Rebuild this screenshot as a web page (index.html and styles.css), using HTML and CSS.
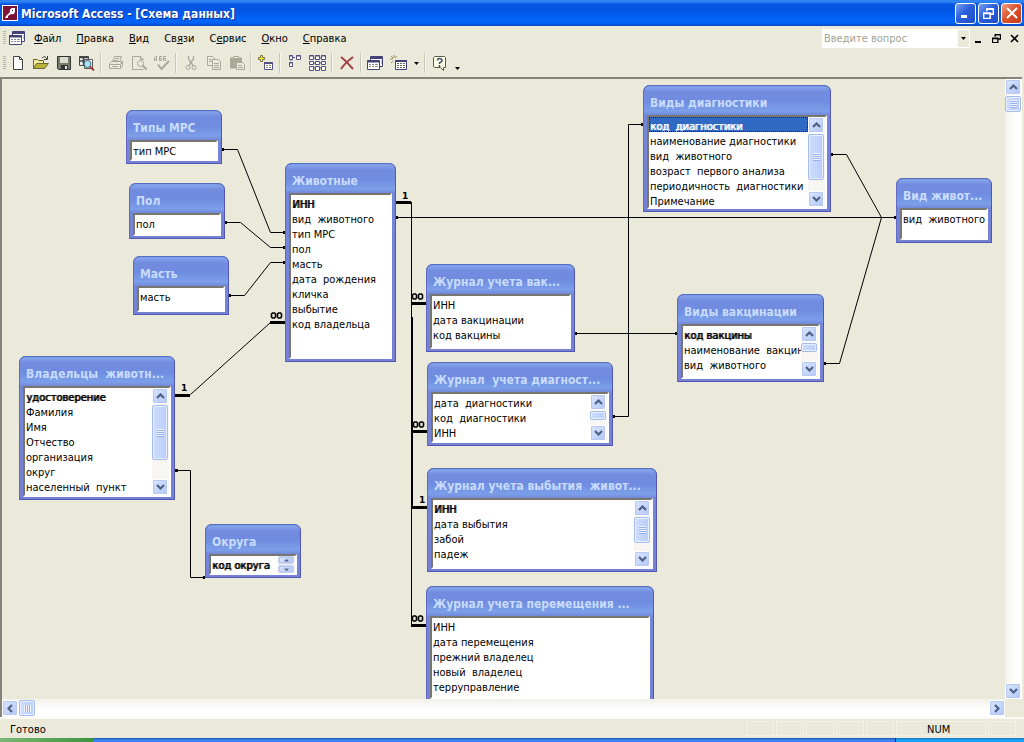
FILE: index.html
```html
<!DOCTYPE html>
<html lang="ru">
<head>
<meta charset="utf-8">
<title>Microsoft Access - [Схема данных]</title>
<link rel="stylesheet" href="styles.css">
</head>
<body>
<svg class="defs" width="0" height="0" aria-hidden="true">
  <symbol id="up" viewBox="0 0 9 6"><path d="M1 5L4.500 1.500L8 5" fill="none" stroke="#4d6185" stroke-width="2.200"/></symbol>
  <symbol id="down" viewBox="0 0 9 6"><path d="M1 1L4.500 4.500L8 1" fill="none" stroke="#4d6185" stroke-width="2.200"/></symbol>
  <symbol id="table" viewBox="0 0 9 8"><path d="M.5 .5h8v7h-8z" fill="#fff" stroke="#555083"/><path d="M0 1h9" stroke="#555083" stroke-width="2"/><path d="M2 3.500h2M5 3.500h2M2 5.500h2M5 5.500h2" stroke="#888"/></symbol>
  <symbol id="windows" viewBox="0 0 17 15"><path d="M3.500 .5h12v10h-12z" fill="#fff" stroke="#45427a"/><path d="M3 2h13" stroke="#45427a" stroke-width="2"/><path d="M.5 4.500h12v9H.5z" fill="#fff" stroke="#45427a"/><path d="M0 5.500h13" stroke="#45427a" stroke-width="2"/><path d="M2 8.500h2M5 8.500h2M8 8.500h3M2 10.500h2M5 10.500h2M8 10.500h3M14 5h1M14 7h1" stroke="#8a8a9a"/></symbol>
  <symbol id="restore" viewBox="0 0 10 10"><path d="M3.500 3V.5h6v5H7M3 1h7M.5 4.500h6v5h-6zM0 5h7" fill="none" stroke="currentColor" stroke-width="1.500"/></symbol>
</svg>

<header class="titlebar">
  <svg class="app-icon" width="16" height="16" viewBox="0 0 16 16"><path d="M0 0h16v16H0z" fill="#fff"/><path d="M1 1h14v14H1z" fill="#7c1238"/><path d="M3 13l1-2 4-4q-1-3 2-4h3v4q-1 3-4 2l-3 2v2z" fill="#fff"/><path d="M10 5h1v1h-1z" fill="#7c1238"/></svg>
  <h1>Microsoft Access - [Схема данных]</h1>
  <div class="win-buttons">
    <button aria-label="Свернуть"><svg width="11" height="11" viewBox="0 0 11 11"><path d="M1 8.500h6" stroke="#fff" stroke-width="3"/></svg></button>
    <button aria-label="Восстановить"><svg width="11" height="11"><use href="#restore"/></svg></button>
    <button class="close" aria-label="Закрыть"><svg width="12" height="12" viewBox="0 0 12 12"><path d="M1 1l10 10M11 1L1 11" stroke="#fff" stroke-width="2"/></svg></button>
  </div>
</header>

<nav class="menubar">
  <span class="grip"></span>
  <svg class="doc-icon" width="17" height="15" viewBox="0 0 17 15"><use href="#windows"/></svg>
  <button><u>Ф</u>айл</button><button><u>П</u>равка</button><button><u>В</u>ид</button><button>Св<u>я</u>зи</button><button>С<u>е</u>рвис</button><button><u>О</u>кно</button><button><u>С</u>правка</button>
  <div class="ask">
    <input type="text" placeholder="Введите вопрос" aria-label="Введите вопрос">
    <button aria-label="Список вопросов"><svg width="5" height="3" viewBox="0 0 5 3"><path d="M0 0h5L2.500 3z"/></svg></button>
  </div>
  <div class="doc-buttons">
    <button aria-label="Свернуть окно"><svg width="10" height="10" viewBox="0 0 10 10"><path d="M2 9h6" stroke="#000" stroke-width="2"/></svg></button>
    <button aria-label="Восстановить окно"><svg width="9" height="9"><use href="#restore"/></svg></button>
    <button aria-label="Закрыть окно"><svg width="9" height="9" viewBox="0 0 9 9"><path d="M1 1l7 7M8 1L1 8" stroke="#000" stroke-width="1.600"/></svg></button>
  </div>
</nav>

<div class="toolbar" role="toolbar">
  <span class="grip"></span>
  <button aria-label="Создать"><svg width="16" height="16" viewBox="0 0 16 16"><path d="M3.500 1.500h6l3 3v10h-9z" fill="#fff" stroke="#444"/><path d="M9.500 1.500v3h3" fill="none" stroke="#444"/></svg></button>
  <button aria-label="Открыть"><svg width="16" height="16" viewBox="0 0 16 16"><path d="M.5 13.500v-9h4l1 1h5v3" fill="#f5ed9b" stroke="#68682c"/><path d="M.5 13.500l3-5h12l-4 5z" fill="#b9b13c" stroke="#68682c"/><path d="M9 3q3-3 5 1M14.500 1v3.500H11" fill="none" stroke="#444"/></svg></button>
  <button aria-label="Сохранить"><svg width="16" height="16" viewBox="0 0 16 16"><path d="M1.500 1.500h13v13h-12l-1-1z" fill="#777a68" stroke="#333"/><path d="M4 2h8v6H4z" fill="#d9d9cc"/><path d="M5 10h7v4H5z" fill="#333"/><path d="M9 11h2v3H9z" fill="#ddd"/></svg></button>
  <button aria-label="Найти файл"><svg width="17" height="16" viewBox="0 0 17 16"><path d="M1.500 1.500h9v9h-9z" fill="#eee" stroke="#444"/><path d="M1 2.500h10M5.500 2v8M2 6h8" stroke="#444" stroke-width="1.500"/><path d="M6.500 4.500h8v9h-8z" fill="#fff" stroke="#555"/><circle cx="9.500" cy="9" r="3.500" fill="#a9e2ef" stroke="#45657a"/><path d="M12 11.500l4 4" stroke="#a33c3c" stroke-width="2"/></svg></button>
  <span class="sep"></span>
  <button disabled aria-label="Печать"><svg width="16" height="16" viewBox="0 0 16 16" fill="none" stroke="#aaa997"><path d="M4.500 7l2-5.500h7l-2 5.500M1.500 8.500l2-2h11l-2 3v4h-11zM1.500 9.500h11l2-3v4l-2 3M4 11.500h6M7 3.500h4M6 5.500h4"/></svg></button>
  <button disabled aria-label="Предварительный просмотр"><svg width="16" height="16" viewBox="0 0 16 16" fill="none" stroke="#aaa997"><path d="M12.500 5V4.500l-3-3h-8v13h11M9.500 1.500v3h3"/><circle cx="9.500" cy="8.500" r="3"/><path d="M11.500 10.500l4 4" stroke-width="2"/></svg></button>
  <button disabled aria-label="Орфография"><svg width="16" height="16" viewBox="0 0 16 16" fill="none" stroke="#aaa997"><path d="M.5 6V2.500l1-1h1v4.500M.5 4.500h2M8 1.500H5.500v4h2v-2h-2M11 1.500H9.500v4h2v-2h-2M10 1.500h2"/><path d="M4 9.500l3.500 4.500L15 6" stroke-width="2"/></svg></button>
  <span class="sep"></span>
  <button disabled aria-label="Вырезать"><svg width="16" height="16" viewBox="0 0 16 16" fill="none" stroke="#aaa997"><path d="M5.500 1v3l5 7M10.500 1v3l-5 7" stroke-width="1.300"/><circle cx="5" cy="12.500" r="2"/><circle cx="11" cy="12.500" r="2"/></svg></button>
  <button disabled aria-label="Копировать"><svg width="16" height="16" viewBox="0 0 16 16" fill="none" stroke="#aaa997"><path d="M6 10.500H1.500v-9h5l2 2V5M6.500 4.500h6l2 2v8h-8zM3 4.500h3M3 6.500h3M8 8.500h5M8 10.500h5M8 12.500h5"/></svg></button>
  <button disabled aria-label="Вставить"><svg width="16" height="16" viewBox="0 0 16 16"><path d="M1 2.500h12v11H1z" fill="#aaa997"/><path d="M4.500 1.500h5v2h-5z" fill="#ecebdc" stroke="#aaa997"/><path d="M7.500 7.500h6l2 2v5h-8z" fill="#ecebdc" stroke="#aaa997"/><path d="M9 10.500h4M9 12.500h5" stroke="#aaa997"/></svg></button>
  <span class="sep"></span>
  <button aria-label="Отобразить таблицу"><svg width="17" height="16" viewBox="0 0 17 16"><path d="M3.500 .5h2v2h2v2h-2v2h-2v-2h-2v-2h2z" fill="#ffef28" stroke="#77743a"/><use href="#table" x="7" y="7" width="9" height="8"/></svg></button>
  <span class="sep"></span>
  <button aria-label="Показать прямые связи"><svg width="16" height="16" viewBox="0 0 16 16" fill="#fff" stroke="#555083"><path d="M2.500 .5h3v4h-3zM9.500 .5h4v4h-4zM2.500 7.500h3v4h-3zM2 1h4M9 1h5M2 8h4M6 2.500h2M4 5v1"/></svg></button>
  <button aria-label="Показать все связи"><svg width="17" height="16" viewBox="0 0 17 16" fill="#fff" stroke="#555083"><path d="M.5 .5h4v4h-4zM6.500 .5h4v4h-4zM12.500 .5h4v4h-4zM.5 6.500h4v3h-4zM6.500 6.500h4v3h-4zM12.500 6.500h4v3h-4zM.5 11.500h4v4h-4zM6.500 11.500h4v4h-4zM12.500 11.500h4v4h-4zM0 1h5M6 1h5M12 1h5M4 3h3M10 3h3M4 8h3M10 8h3M4 13h3M10 13h3"/></svg></button>
  <span class="sep"></span>
  <button aria-label="Удалить"><svg width="16" height="16" viewBox="0 0 16 16"><path d="M2 2q5 4 12 12M14 2Q6 8 2 14" fill="none" stroke="#a33f42" stroke-width="2"/></svg></button>
  <span class="sep"></span>
  <button aria-label="Окно базы данных"><svg width="17" height="15" viewBox="0 0 17 15"><use href="#windows"/></svg></button>
  <button aria-label="Новый объект"><svg width="17" height="16" viewBox="0 0 17 16"><path d="M4 0v3M0 4h3M1 1l2 2M7 1L5 3M1 8l2-2" stroke="#96985a"/><path d="M5.500 5.500h11v9h-11z" fill="#fff" stroke="#45427a"/><path d="M5 6h12" stroke="#45427a" stroke-width="2"/><path d="M7 8.500h8M7 10.500h8M7 12.500h8" stroke="#666" stroke-dasharray="2 1"/></svg></button>
  <button class="arrow" aria-label="Другие объекты"><svg width="5" height="3" viewBox="0 0 5 3"><path d="M0 0h5L2.500 3z"/></svg></button>
  <span class="sep"></span>
  <button aria-label="Справка"><svg width="16" height="17" viewBox="0 0 16 17"><path d="M2.500 1.500h10l1 1v10h-2v3l-3-3h-6l-1-1v-9z" fill="#ffffe8" stroke="#5a5a4c"/><path d="M5.500 5.500q0-2 2-2t2.500 1.500-2.500 3v1M7.500 10v2" fill="none" stroke="#444b70" stroke-width="1.600"/></svg></button>
  <button class="arrow low" aria-label="Параметры панели"><svg width="5" height="3" viewBox="0 0 5 3"><path d="M0 0h5L2.500 3z"/></svg></button>
</div>

<main class="workspace">
  <div class="canvas">
    <section class="node types"><h2>Типы МРС</h2><div class="list"><ul><li>тип МРС</li></ul></div></section>
    <section class="node sex"><h2>Пол</h2><div class="list"><ul><li>пол</li></ul></div></section>
    <section class="node suit"><h2>Масть</h2><div class="list"><ul><li>масть</li></ul></div></section>
    <section class="node animals"><h2>Животные</h2><div class="list"><ul><li class="key">ИНН</li><li>вид  животного</li><li>тип МРС</li><li>пол</li><li>масть</li><li>дата  рождения</li><li>кличка</li><li>выбытие</li><li>код владельца</li></ul></div></section>
    <section class="node owners"><h2>Владельцы  животн...</h2><div class="list"><ul><li class="key">удостоверение</li><li>Фамилия</li><li>Имя</li><li>Отчество</li><li>организация</li><li>округ</li><li>населенный  пункт</li></ul>
      <div class="vbar"><button aria-label="Вверх"><svg width="9" height="6"><use href="#up"/></svg></button><span class="thumb large"><i></i></span><button class="end" aria-label="Вниз"><svg width="9" height="6"><use href="#down"/></svg></button></div></div></section>
    <section class="node districts"><h2>Округа</h2><div class="list"><ul><li class="key">код округа</li></ul>
      <div class="vbar mini"><button aria-label="Вверх"><svg width="5" height="3"><use href="#up"/></svg></button><button aria-label="Вниз"><svg width="5" height="3"><use href="#down"/></svg></button></div></div></section>
    <section class="node log-vaccine"><h2>Журнал учета вак...</h2><div class="list"><ul><li>ИНН</li><li>дата вакцинации</li><li>код вакцины</li></ul></div></section>
    <section class="node log-diagnosis"><h2>Журнал  учета диагност...</h2><div class="list"><ul><li>дата  диагностики</li><li>код  диагностики</li><li>ИНН</li></ul>
      <div class="vbar"><button aria-label="Вверх"><svg width="9" height="6"><use href="#up"/></svg></button><span class="thumb small"></span><button class="end" aria-label="Вниз"><svg width="9" height="6"><use href="#down"/></svg></button></div></div></section>
    <section class="node log-leaving"><h2>Журнал учета выбытия  живот...</h2><div class="list"><ul><li class="key">ИНН</li><li>дата выбытия</li><li>забой</li><li>падеж</li></ul>
      <div class="vbar"><button aria-label="Вверх"><svg width="9" height="6"><use href="#up"/></svg></button><span class="thumb middle"><i></i></span><button class="end" aria-label="Вниз"><svg width="9" height="6"><use href="#down"/></svg></button></div></div></section>
    <section class="node log-moving"><h2>Журнал учета перемещения ...</h2><div class="list"><ul><li>ИНН</li><li>дата перемещения</li><li>прежний владелец</li><li>новый  владелец</li><li>терруправление</li></ul></div></section>
    <section class="node diagnosis"><h2>Виды диагностики</h2><div class="list"><ul><li class="key selected">код  диагностики</li><li>наименование диагностики</li><li>вид  животного</li><li>возраст  первого анализа</li><li>периодичность  диагностики</li><li>Примечание</li></ul>
      <div class="vbar"><button aria-label="Вверх"><svg width="9" height="6"><use href="#up"/></svg></button><span class="thumb big"><i></i></span><button class="end" aria-label="Вниз"><svg width="9" height="6"><use href="#down"/></svg></button></div></div></section>
    <section class="node species"><h2>Вид живот...</h2><div class="list"><ul><li>вид  животного</li></ul></div></section>
    <section class="node vaccine"><h2>Виды вакцинации</h2><div class="list"><ul><li class="key">код вакцины</li><li>наименование  вакцины</li><li>вид  животного</li></ul>
      <div class="vbar"><button aria-label="Вверх"><svg width="9" height="6"><use href="#up"/></svg></button><span class="thumb small"></span><button class="end" aria-label="Вниз"><svg width="9" height="6"><use href="#down"/></svg></button></div></div></section>

    <svg class="links" width="1003" height="621" viewBox="2 79 1003 621">
      <g class="thin">
        <path d="M222 149.500H237.500L270.500 232.500H285"/>
        <path d="M225 222.500H240.500L270.500 247.500H285"/>
        <path d="M229 295.500H244.500L270.500 262.500H285"/>
        <path d="M190.500 394.500L270.500 322.500"/>
        <path d="M175 470.500H190.500V577.500H205"/>
        <path d="M396 217.500H896"/>
        <path d="M831 154.500H846.500L881.500 217.500L839.500 363.500H824"/>
        <path d="M575 333.500H677"/>
        <path d="M613 416.500H628.500V124.500H643"/>
        <path d="M411.500 202V625"/>
      </g>
      <path class="medium" d="M412 317V508"/>
      <path class="thick" d="M175 395.500H190M270 322.500H285M396 202.500H411M411 303.500H426M412 431.500H427M411 507.500H427M411 625.500H426"/>
      <path class="ends" d="M222 148h2v3h-2zM225 221h2v3h-2zM229 294h2v3h-2zM283 231h2v3h-2zM283 246h2v3h-2zM283 261h2v3h-2zM175 469h3v3h-3zM203 576h2v3h-2zM396 216h2v3h-2zM894 216h2v3h-2zM831 153h2v3h-2zM824 362h2v3h-2zM575 332h2v3h-2zM675 332h2v3h-2zM613 415h2v3h-2zM641 123h2v3h-2z"/>
      <g class="many">
        <path d="M271.500 314l1-1h2l1 1v3l-1 1h-2l-1-1zM277.500 314l1-1h2l1 1v3l-1 1h-2l-1-1z"/>
        <path d="M412.500 295l1-1h2l1 1v3l-1 1h-2l-1-1zM418.500 295l1-1h2l1 1v3l-1 1h-2l-1-1z"/>
        <path d="M413.500 423l1-1h2l1 1v3l-1 1h-2l-1-1zM419.500 423l1-1h2l1 1v3l-1 1h-2l-1-1z"/>
        <path d="M412.500 617l1-1h2l1 1v3l-1 1h-2l-1-1zM418.500 617l1-1h2l1 1v3l-1 1h-2l-1-1z"/>
      </g>
      <g class="one"><text x="181" y="391">1</text><text x="402" y="199">1</text><text x="419" y="503">1</text></g>
    </svg>
  </div>
  <div class="vbar page-v"><button aria-label="Вверх"><svg width="9" height="6"><use href="#up"/></svg></button><span class="thumb square"><i></i></span><button class="end" aria-label="Вниз"><svg width="9" height="6"><use href="#down"/></svg></button></div>
  <div class="hbar"><button aria-label="Влево"><svg width="6" height="9" viewBox="0 0 6 9"><path d="M5 1L1.500 4.500L5 8" fill="none" stroke="#4d6185" stroke-width="2.200"/></svg></button><span class="thumb square"><i></i></span><button class="end" aria-label="Вправо"><svg width="6" height="9" viewBox="0 0 6 9"><path d="M1 1L4.500 4.500L1 8" fill="none" stroke="#4d6185" stroke-width="2.200"/></svg></button></div>
</main>

<footer class="status"><span class="ready">Готово</span><span class="cell"></span><span class="cell"></span><span class="cell"></span><span class="cell"></span><span class="cell"></span><span class="cell num">NUM</span><span class="cell"></span></footer>
<div class="taskbar"><span class="start"></span><span class="tray"></span></div>
</body>
</html>
```

FILE: styles.css
```css
* { box-sizing: border-box; }

body {
  margin: 0;
  height: 100vh;
  display: flex;
  flex-direction: column;
  overflow: hidden;
  background: #ebe9da;
  color: #000;
  font: 11px/15px "DejaVu Sans Condensed", "DejaVu Sans", sans-serif;
}

button { border: 0; padding: 0; background: none; color: inherit; font: inherit; display: flex; align-items: center; justify-content: center; }
svg { display: block; flex: none; }
.defs { position: absolute; }

.titlebar {
  flex: none;
  height: 26px;
  display: flex;
  align-items: center;
  gap: 3px;
  padding: 0 2px 0 2px;
  background: linear-gradient(#2f83f5 0, #2f83f5 2px, #0757e4 4px, #0455e0 10px, #0264fc 20px, #0262f5 23px, #0645c0 26px);
}
.titlebar h1 { margin: 0; flex: 1; padding-top: 1px; color: #fff; font: bold 12px/20px "DejaVu Sans Condensed", "DejaVu Sans", sans-serif; text-shadow: 1px 1px #0b2f8c; }
.win-buttons { display: flex; gap: 2px; }
.win-buttons button { width: 21px; height: 21px; border: 1px solid #fff; border-radius: 3px; color: #fff; background: linear-gradient(135deg, #7ba1f2, #2a5edc 45%, #1f4fc8); }
.win-buttons .close { background: linear-gradient(135deg, #f0a088, #dd5430 45%, #c23c16); }

.menubar { flex: none; height: 24px; display: flex; align-items: center; gap: 1px; padding: 0 5px 0 3px; }
.menubar > button { padding: 0 7px; display: block; }
.grip { width: 3px; height: 14px; background: repeating-linear-gradient(#b9b7a6 0, #b9b7a6 1px, transparent 1px, transparent 2px); }
.doc-icon { margin-left: 2px; }
.ask { margin-left: auto; display: flex; width: 148px; height: 19px; border: 1px solid #fff; background: #fff; }
.ask input { flex: 1; min-width: 0; border: 0; padding: 0 1px; background: #fff; font: inherit; }
.ask input::placeholder { color: #a3a294; opacity: 1; }
.ask button { width: 11px; background: #ebe9da; }
.doc-buttons { display: flex; gap: 8px; padding-left: 2px; }
.doc-buttons button { width: 10px; height: 12px; }

.toolbar { flex: none; height: 27px; display: flex; align-items: center; padding: 0 3px 1px; }
.toolbar button { width: 23px; height: 22px; }
.toolbar .arrow { width: 12px; }
.toolbar .low { align-items: flex-end; padding-bottom: 4px; }
.sep { width: 2px; height: 20px; margin: 0 2px; border-left: 1px solid #c8c6b4; border-right: 1px solid #f8f7f0; }

.workspace {
  flex: 1;
  min-height: 0;
  display: grid;
  grid-template-columns: 1fr 17px;
  grid-template-rows: 1fr 18px;
  margin-right: 2px;
  border-top: 2px solid #85847a;
  border-left: 2px solid #85847a;
}
.canvas { position: relative; overflow: hidden; background: #ebe9da; }

.node {
  position: absolute;
  display: flex;
  flex-direction: column;
  padding: 0 4px 3px;
  border-radius: 7px 7px 0 0;
  background: linear-gradient(#6a83d6 0, #84a4ec 2px, #738bdf 7px, #6f8ce0 16px, #7c9fe9 26px, #7287da 30px, #7680d4 100%);
  box-shadow: inset 1px 0 #6269c2, inset -1px -1px #5257b4, inset 0 1px #566fc0;
}
.node h2 { flex: none; margin: 0; height: 30px; padding: 8px 0 0 3px; color: #c9dcff; font: bold 12px/20px "DejaVu Sans Condensed", "DejaVu Sans", sans-serif; white-space: pre; overflow: hidden; }
.list { flex: 1; min-height: 0; display: flex; overflow: hidden; background: #fff; border: 2px solid #fff; border-top-color: #77776f; border-left-color: #77776f; }
.list ul { flex: 1; min-width: 0; margin: 0; padding: 0; list-style: none; overflow: hidden; }
.list li { height: 15px; padding-left: 1px; line-height: 19px; white-space: pre; }
.key { text-shadow: 1px 0 currentColor; }
.selected { color: #fff; background: #316ac5; outline: 1px dotted #10233f; outline-offset: -1px; }

.types { left: 124px; top: 31px; width: 96px; height: 54px; }
.sex { left: 127px; top: 104px; width: 96px; height: 56px; }
.suit { left: 131px; top: 177px; width: 96px; height: 59px; }
.animals { left: 283px; top: 84px; width: 111px; height: 199px; }
.owners { left: 17px; top: 277px; width: 156px; height: 144px; }
.districts { left: 203px; top: 445px; width: 96px; height: 54px; }
.log-vaccine { left: 424px; top: 185px; width: 149px; height: 88px; }
.log-diagnosis { left: 425px; top: 283px; width: 186px; height: 84px; }
.log-leaving { left: 425px; top: 389px; width: 230px; height: 104px; }
.log-moving { left: 424px; top: 507px; width: 228px; height: 116px; }
.diagnosis { left: 641px; top: 6px; width: 188px; height: 127px; }
.species { left: 894px; top: 99px; width: 96px; height: 65px; }
.vaccine { left: 675px; top: 215px; width: 147px; height: 88px; }

.vbar { flex: none; width: 17px; display: flex; flex-direction: column; background: #f7f6f2; }
.vbar button, .hbar button { flex: none; width: 16px; height: 16px; border: 1px solid #fff; border-radius: 2px; background: linear-gradient(135deg, #dbe5ff, #b3c8f8); box-shadow: inset 0 0 0 1px #b7c9f2; }
.vbar .end { margin-top: auto; }
.thumb { flex: none; display: flex; align-items: center; justify-content: center; width: 16px; margin: 1px 0; border: 1px solid #a5bdea; border-radius: 2px; background: linear-gradient(90deg, #cfdcff, #b9cdfb); box-shadow: inset 0 0 0 1px #e8efff; }
.thumb i { width: 7px; height: 8px; background: repeating-linear-gradient(#f0f5ff 0, #f0f5ff 1px, #95adeb 1px, #95adeb 2px); }
.large { height: 55px; }
.big { height: 46px; }
.middle { height: 26px; }
.small { height: 9px; }
.square { height: 16px; }
.mini { gap: 1px; }
.mini button { flex: 1; height: auto; min-height: 0; border-color: #c6d2ee; }

.page-v { background: linear-gradient(90deg, #f2f1ea, #fff 60%); }
.hbar { display: flex; align-items: center; background: linear-gradient(#f2f1ea, #fff 60%); }
.hbar .end { margin-left: auto; }
.hbar .thumb { margin: 0 1px; }
.hbar .thumb i { height: 7px; background: repeating-linear-gradient(90deg, #f0f5ff 0, #f0f5ff 1px, #95adeb 1px, #95adeb 2px); }

.links { position: absolute; left: 0; top: 0; pointer-events: none; }
.thin { fill: none; stroke: #000; stroke-width: 1; }
.medium { stroke: #000; stroke-width: 2; }
.thick { stroke: #000; stroke-width: 3; }
.ends { fill: #000; }
.many { fill: none; stroke: #000; stroke-width: 1.6; }
.one { font: bold 9px "DejaVu Sans", sans-serif; }

.status { flex: none; height: 21px; display: flex; align-items: center; gap: 2px; padding: 0 8px 0 10px; border-top: 2px solid #fbfaf5; }
.ready { flex: 1; padding-top: 1px; }
.cell { width: 28px; height: 15px; border: 1px solid #f3f2e8; }
.num { width: 90px; padding-left: 30px; line-height: 15px; }

.taskbar { flex: none; height: 4px; display: flex; justify-content: space-between; background: linear-gradient(#1f4fb4, #3c86ee 2px); }
.start { width: 93px; background: linear-gradient(90deg, #7cb877, #3c9440); }
.tray { width: 129px; border-left: 1px solid #0b2f6c; background: linear-gradient(#1571b8, #18a4f4 2px); }
```
